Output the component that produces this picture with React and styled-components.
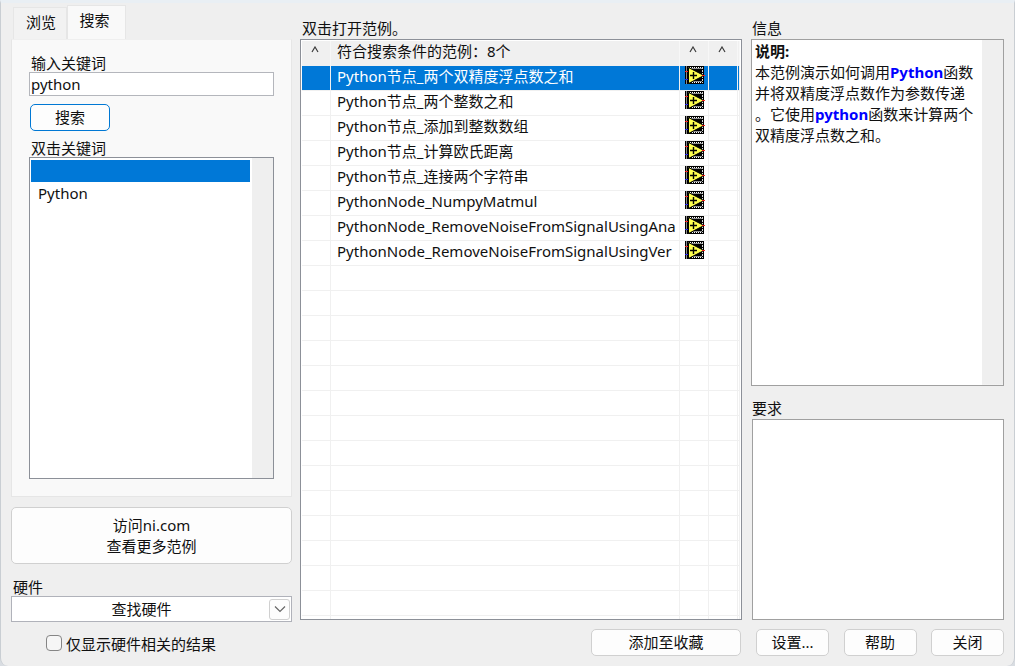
import React, { useState } from "react";
import styled, { createGlobalStyle } from "styled-components";

const GlobalStyle = createGlobalStyle`
  *, *::before, *::after { box-sizing: border-box; }
  html, body { margin: 0; background: #d9dde2; }
  body, button, input, select {
    font-family: "Noto Sans", "Noto Sans CJK SC", sans-serif;
    font-size: 15px;
    color: #101010;
  }
`;

const Dialog = styled.main`
  display: grid;
  grid-template-columns: 281fr 442fr 254fr;
  column-gap: 8px;
  height: 100vh;
  min-height: 600px;
  padding: 0 10px 10px;
  background: #efefef;
  border: 1px solid #c9ced3;
  border-top: 3px solid #e9eff4;
  border-bottom: 0;
  border-radius: 0 0 8px 8px;
  overflow: hidden;
`;

const Column = styled.div`
  display: flex;
  flex-direction: column;
  min-width: 0;
  min-height: 0;
  padding-top: ${(p) => p.$top || 0}px;
`;

const Label = styled.label`
  display: block;
  flex: none;
  height: 19px;
  line-height: 20px;
  padding-left: 2px;
  white-space: nowrap;
`;

const Heading = styled.h2`
  margin: ${(p) => p.$gap || 0}px 0 0;
  flex: none;
  height: ${(p) => p.$height || 19}px;
  line-height: 20px;
  padding-left: 2px;
  font-size: 15px;
  font-weight: 400;
`;

const Tabs = styled.div`
  display: flex;
  align-items: flex-end;
  height: 36px;
  padding-left: 2px;
`;

const Tab = styled.button`
  width: ${(p) => (p.$active ? 59 : 54)}px;
  height: ${(p) => (p.$active ? 34 : 32)}px;
  padding: ${(p) => (p.$active ? "0 4px 6px 0" : "0 0 4px 2px")};
  background: ${(p) => (p.$active ? "#f9f9f9" : "#f2f2f2")};
  border: 1px solid #e6e6e6;
  border-bottom: 0;
`;

const TabPanel = styled.section`
  display: flex;
  flex-direction: column;
  flex: 1;
  min-height: 0;
  padding: 13px 17px 17px;
  background: #f9f9f9;
  border: 1px solid #e6e6e6;
  border-top-color: #efefef;
`;

const KeywordInput = styled.input`
  width: 100%;
  height: 24px;
  flex: none;
  padding: 0 1px;
  border: 1px solid #b4b6bc;
  background: #fff;
  outline: 0;
`;

const Button = styled.button`
  flex: none;
  width: ${(p) => p.$width};
  height: ${(p) => p.$height || 27}px;
  margin: ${(p) => p.$margin || 0};
  padding: 0;
  line-height: 21px;
  background: #fdfdfd;
  border: 1px solid ${(p) => (p.$primary ? "#0078d4" : "#d0d0d0")};
  border-radius: 5px;
`;

const ListBox = styled.ul`
  flex: 1;
  min-height: 0;
  margin: 0;
  padding: 2px 23px 0 1px;
  list-style: none;
  border: 1px solid #8c9098;
  background: linear-gradient(#efefef, #efefef) right / 21px 100% no-repeat #fff;
`;

const ListItem = styled.li`
  height: 22px;
  line-height: 22px;
  padding-left: 7px;
  background: ${(p) => (p.$selected ? "#0078d7" : "transparent")};
`;

const SelectBox = styled.div`
  display: grid;
  align-items: center;
  flex: none;
  height: 26px;
  background: #fff;
  border: 1px solid #b0b2ba;
`;

const Select = styled.select`
  grid-area: 1 / 1;
  width: 100%;
  height: 24px;
  padding: 0 20px 0 0;
  appearance: none;
  border: 0;
  background: transparent;
  text-align: center;
  text-align-last: center;
`;

const Drop = styled.span`
  grid-area: 1 / 1;
  justify-self: end;
  display: flex;
  align-items: center;
  justify-content: center;
  width: 21px;
  height: 21px;
  margin-right: 1px;
  border: 1px solid #d0d0d0;
  border-radius: 3px;
  background: #fdfdfd;
  pointer-events: none;
`;

const CheckLabel = styled.label`
  display: flex;
  align-items: center;
  flex: none;
  gap: 4px;
  height: 24px;
  margin: 10px 0 0 35px;
  line-height: 24px;
`;

const CheckBox = styled.input`
  appearance: none;
  width: 16px;
  height: 16px;
  margin: 0 0 3px;
  border: 1px solid #858585;
  border-radius: 4px;
  background: ${(p) => (p.checked ? "#0078d4" : "#f6f6f6")};
`;

const TableFrame = styled.div`
  flex: 1;
  min-height: 0;
  overflow: hidden;
  padding: 1px;
  border: 1px solid #8c9098;
  background: #fff;
`;

const Table = styled.table`
  width: 100%;
  table-layout: fixed;
  border-collapse: separate;
  border-spacing: 0;
`;

const HeadCell = styled.th`
  height: 25px;
  padding: ${(p) => (p.$mark ? "5px 3px 0 0" : "0 0 0 6px")};
  line-height: 20px;
  font-weight: 400;
  text-align: ${(p) => (p.$mark ? "center" : "left")};
  vertical-align: top;
  background: #f0f0f0;
  border-right: 1px solid #f7f7f7;
  white-space: nowrap;
  overflow: hidden;

  svg { display: block; margin: 0 auto; }
`;

const Cell = styled.td`
  height: 25px;
  padding: ${(p) => (p.$icon ? "0 0 0 5px" : "0 0 0 6px")};
  line-height: 20px;
  border-right: 1px solid #f0f0f0;
  border-bottom: 1px solid #f0f0f0;
  color: ${(p) => (p.$selected ? "#fff" : "inherit")};
  background: ${(p) => (p.$selected ? "#0078d7" : "#fff")};
  white-space: nowrap;
  overflow: hidden;
  vertical-align: top;

  svg { display: block; }
`;

const Info = styled.article`
  flex: ${(p) => p.$grow};
  min-height: 0;
  margin-left: ${(p) => p.$indent || 0}px;
  padding: 1px 26px 0 3px;
  line-height: 21px;
  line-break: anywhere;
  border: 1px solid #a0a0a0;
  background: ${(p) =>
    p.$scroll
      ? "linear-gradient(#efefef, #efefef) right / 21px 100% no-repeat #fff"
      : "#fff"};

  p { margin: 0; }
  em { font-style: normal; font-weight: 700; color: #0000ff; }
`;

const Actions = styled.div`
  display: flex;
  flex: none;
  justify-content: ${(p) => (p.$end ? "flex-end" : "space-between")};
  padding: 9px ${(p) => (p.$end ? 1 : 0)}px 0 6px;
`;

const CaretMark = () => (
  <svg width="8" height="7" viewBox="0 0 8 7" aria-hidden="true">
    <path d="M1 6L4 1L7 6" fill="none" stroke="#3c3c3c" strokeWidth="1.200" />
  </svg>
);

const ViIcon = () => (
  <svg width="20" height="18" viewBox="0 0 20 18" aria-hidden="true">
    <rect width="19" height="18" fill="#000" />
    <path d="M1.500 0V18" stroke="#8a8a8a" />
    <path d="M3 1.500H18M3 16.500H18" stroke="#fff" strokeDasharray="1 1" />
    <path d="M17.500 1V17" stroke="#d8d8d8" strokeDasharray="2 1" />
    <path d="M3 2.500H17M3 15.500H17" stroke="#909090" />
    <path d="M3.500 1.500L19 9.500L3.500 17.500Z" fill="#ffff50" stroke="#000" strokeWidth="1" />
    <path d="M5 9.500H12M8.500 6V13" stroke="#000" strokeWidth="1.400" />
    <path d="M0 5.500H3M17 9.500H20" stroke="#f02020" />
    <path d="M0 13.500H3" stroke="#2020e0" />
  </svg>
);

const examples = [
  "Python节点_两个双精度浮点数之和",
  "Python节点_两个整数之和",
  "Python节点_添加到整数数组",
  "Python节点_计算欧氏距离",
  "Python节点_连接两个字符串",
  "PythonNode_NumpyMatmul",
  "PythonNode_RemoveNoiseFromSignalUsingAna",
  "PythonNode_RemoveNoiseFromSignalUsingVer",
];
const rows = Array.from({ length: 23 }, (_, i) => examples[i] || "");

export default function App() {
  const [keyword, setKeyword] = useState("python");
  const [onlyHardware, setOnlyHardware] = useState(false);

  return (
    <>
      <GlobalStyle />
      <Dialog>
        <Column>
          <Tabs role="tablist">
            <Tab role="tab" aria-selected="false">浏览</Tab>
            <Tab role="tab" aria-selected="true" $active>搜索</Tab>
          </Tabs>
          <TabPanel>
            <Label htmlFor="keyword">输入关键词</Label>
            <KeywordInput id="keyword" value={keyword} onChange={(e) => setKeyword(e.target.value)} />
            <Button $primary $width="80px" $margin="8px 0 7px 1px">搜索</Button>
            <Heading>双击关键词</Heading>
            <ListBox>
              <ListItem $selected />
              <ListItem>Python</ListItem>
            </ListBox>
          </TabPanel>
          <Button $width="100%" $height={57} $margin="10px 0 13px">
            访问ni.com<br />查看更多范例
          </Button>
          <Label htmlFor="hardware">硬件</Label>
          <SelectBox>
            <Select id="hardware"><option>查找硬件</option></Select>
            <Drop>
              <svg width="12" height="8" viewBox="0 0 12 8" aria-hidden="true">
                <path d="M1 1.500L6 6.500L11 1.500" fill="none" stroke="#666" strokeWidth="1.200" />
              </svg>
            </Drop>
          </SelectBox>
          <CheckLabel>
            <CheckBox type="checkbox" checked={onlyHardware} onChange={(e) => setOnlyHardware(e.target.checked)} />
            仅显示硬件相关的结果
          </CheckLabel>
        </Column>

        <Column $top={15}>
          <Heading $height={21}>双击打开范例。</Heading>
          <TableFrame>
            <Table>
              <colgroup>
                <col style={{ width: 29 }} />
                <col />
                <col style={{ width: 29 }} />
                <col style={{ width: 29 }} />
                <col style={{ width: 2 }} />
              </colgroup>
              <thead>
                <tr>
                  <HeadCell $mark><CaretMark /></HeadCell>
                  <HeadCell>符合搜索条件的范例：8个</HeadCell>
                  <HeadCell $mark><CaretMark /></HeadCell>
                  <HeadCell $mark><CaretMark /></HeadCell>
                  <HeadCell />
                </tr>
              </thead>
              <tbody>
                {rows.map((name, i) => (
                  <tr key={i}>
                    <Cell $selected={i === 0} />
                    <Cell $selected={i === 0}>{name}</Cell>
                    <Cell $selected={i === 0} $icon>{name && <ViIcon />}</Cell>
                    <Cell $selected={i === 0} />
                    <Cell $selected={i === 0} />
                  </tr>
                ))}
              </tbody>
            </Table>
          </TableFrame>
          <Actions $end>
            <Button $width="150px">添加至收藏</Button>
          </Actions>
        </Column>

        <Column $top={15}>
          <Heading $height={21}>信息</Heading>
          <Info $grow={348} $scroll $indent={1}>
            <p><strong>说明:</strong></p>
            <p>本范例演示如何调用<em>Python</em>函数并将双精度浮点数作为参数传递。它使用<em>python</em>函数来计算两个双精度浮点数之和。</p>
          </Info>
          <Heading $height={21} $gap={12}>要求</Heading>
          <Info $grow={201} $indent={2} />
          <Actions>
            <Button $width="73px">设置...</Button>
            <Button $width="73px">帮助</Button>
            <Button $width="73px">关闭</Button>
          </Actions>
        </Column>
      </Dialog>
    </>
  );
}
